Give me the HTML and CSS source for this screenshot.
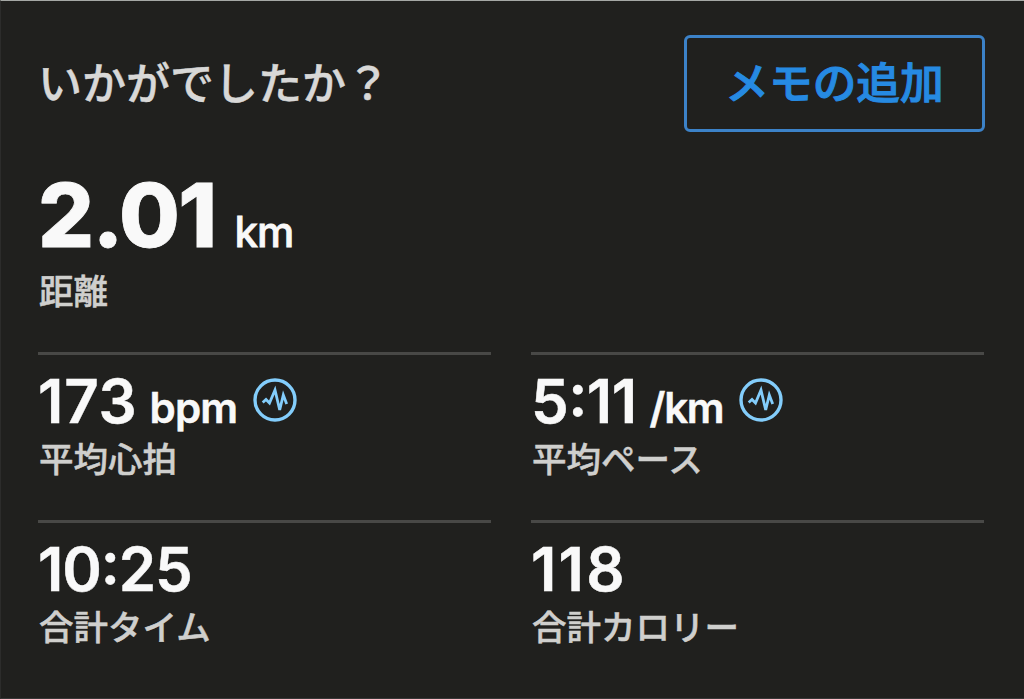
FILE: index.html
```html
<!DOCTYPE html>
<html lang="ja">
<head>
    <meta charset="UTF-8">
    <title>アクティビティ</title>
    <link rel="stylesheet" href="styles.css">
</head>
<body>

<div class="header">
    <h1 class="question">いかがでしたか？</h1>
    <button class="memo-btn">メモの追加</button>
</div>

<div class="distance">
    <div class="value">2.01<span class="unit">km</span></div>
    <div class="label">距離</div>
</div>

<div class="stats">
    <div class="stat">
        <div class="value">173<span class="unit">bpm</span>
            <svg class="icon" viewBox="0 0 44 44">
                <circle cx="22" cy="22" r="20"/>
                <path d="M9.700 24.500L13 21.500L16.500 25L22 12L26.700 32L30.300 17L33.700 26"/>
            </svg>
        </div>
        <div class="label">平均心拍</div>
    </div>
    <div class="stat">
        <div class="value time pace">5:11<span class="unit">/km</span>
            <svg class="icon" viewBox="0 0 44 44">
                <circle cx="22" cy="22" r="20"/>
                <path d="M9.700 24.500L13 21.500L16.500 25L22 12L26.700 32L30.300 17L33.700 26"/>
            </svg>
        </div>
        <div class="label">平均ペース</div>
    </div>
    <div class="stat">
        <div class="value time">10:25</div>
        <div class="label">合計タイム</div>
    </div>
    <div class="stat">
        <div class="value calories">118</div>
        <div class="label">合計カロリー</div>
    </div>
</div>

</body>
</html>
```

FILE: styles.css
```css
* {
    box-sizing: border-box;
}

body {
    margin: 0;
    height: 699px;
    padding: 34px 39px 0 37px;
    border-top: 1px solid #a5a8a5;
    border-left: 1px solid #2c2c2b;
    border-bottom: 1px solid #373737;
    background: #20201e;
    color: #f9f9f9;
    font-family: Inter, "Noto Sans CJK JP", sans-serif;
    overflow: hidden;
}

.header {
    display: flex;
    justify-content: space-between;
    height: 97px;
}

.question {
    margin: 0;
    font-size: 44px;
    font-weight: 500;
    line-height: 99px;
    color: #d8d8d7;
    -webkit-text-stroke: 0.5px;
}

.memo-btn {
    width: 301px;
    height: 97px;
    padding: 0 0 7px;
    border: 3px solid #3c82c8;
    border-radius: 6px;
    background: none;
    color: #268ae2;
    font-family: inherit;
    font-size: 43.7px;
    font-weight: 500;
    -webkit-text-stroke: 1px;
}

.value {
    display: flex;
    align-items: baseline;
    white-space: nowrap;
}

.distance {
    height: 220px;
    padding-top: 34px;
}

.distance .value {
    height: 102px;
    font-size: 88px;
    font-weight: 800;
    line-height: 99px;
    letter-spacing: -1.7px;
    -webkit-text-stroke: 0.8px;
}

.distance .unit {
    margin-left: 19px;
    font-size: 42px;
    font-weight: 500;
    letter-spacing: -0.8px;
}

.label {
    margin-left: 1px;
    font-size: 34.5px;
    font-weight: 500;
    line-height: 48px;
    color: #cfcfcd;
    -webkit-text-stroke: 0.5px;
}

.stats {
    display: grid;
    grid-template-columns: 453px 453px;
    column-gap: 40px;
}

.stat {
    height: 168px;
    padding-top: 14px;
    border-top: 3px solid #484846;
}

.stat .value {
    height: 67px;
    font-size: 60px;
    font-weight: 600;
    line-height: 64px;
    letter-spacing: 0.8px;
    -webkit-text-stroke: 0.5px;
}

.stat .time {
    letter-spacing: -1.1px;
    font-feature-settings: "calt", "case";
}

.stat .pace {
    letter-spacing: -0.5px;
}

.stat .calories {
    letter-spacing: 2.2px;
}

.stat .unit {
    margin-left: 12px;
    font-size: 42px;
    letter-spacing: -0.8px;
}

.pace .unit {
    margin-left: 13px;
    letter-spacing: -1.3px;
    font-feature-settings: "calt" 0, "case" 0;
}

.icon {
    width: 44px;
    height: 44px;
    margin: 9px 0 0 16px;
    align-self: flex-start;
    fill: none;
    stroke: #83cdfb;
    stroke-width: 3.4;
}

.icon path {
    stroke-width: 2.8;
}
```
